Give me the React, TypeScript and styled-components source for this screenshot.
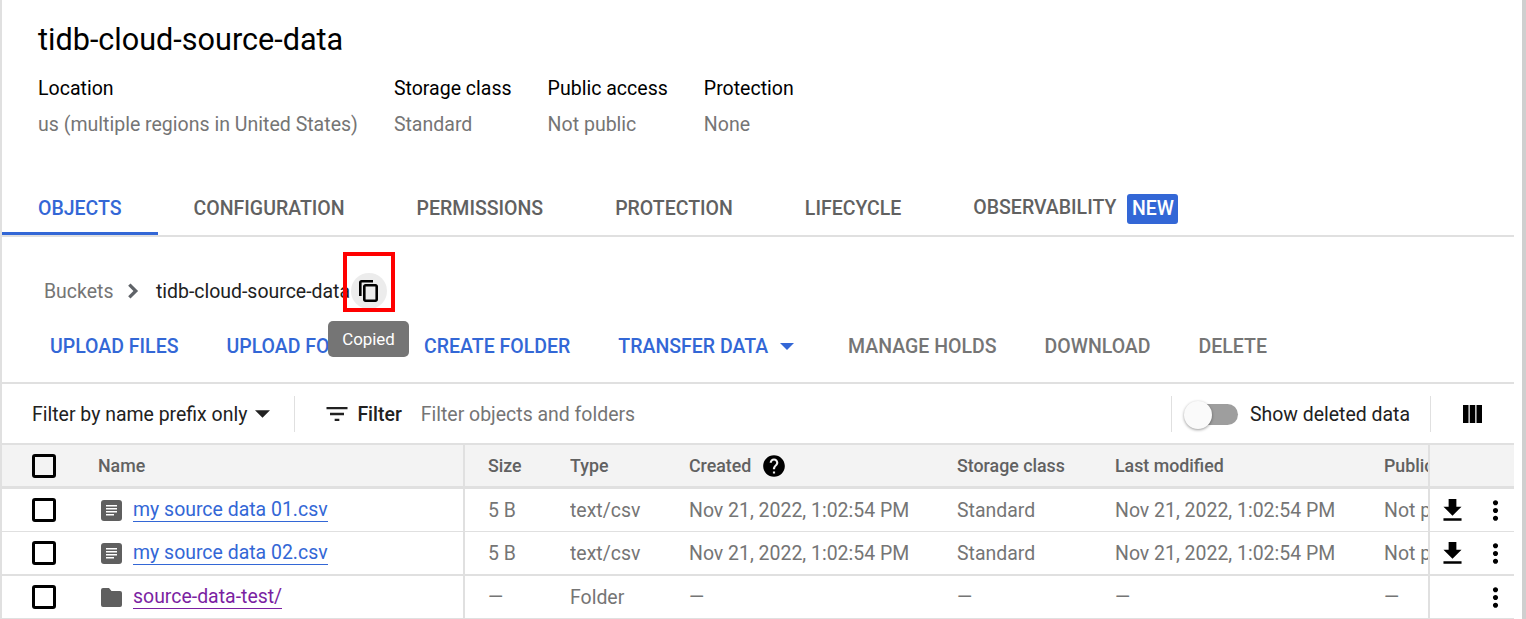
import React from 'react';
import styled, { createGlobalStyle } from 'styled-components';

const GlobalStyle = createGlobalStyle`
  html, body {
    margin: 0;
    padding: 0;
    background: #fff;
    font-family: Roboto, 'Liberation Sans', sans-serif;
    overflow: hidden;
  }
`;

const Page = styled.div`
  width: 1526px;
  height: 619px;
  box-sizing: border-box;
  border-left: 2px solid #e0e0e0;
  border-right: 4px solid #cfcfcf;
  overflow: hidden;
`;

const Main = styled.div`
  width: 1512px;
`;

const Header = styled.header`
  padding: 20px 0 0 36px;
  height: 181px;
  box-sizing: border-box;
`;

const Title = styled.h1`
  margin: 0;
  font-size: 30.6px;
  line-height: 40px;
  font-weight: 400;
  color: #000;
`;

const Summary = styled.div`
  display: flex;
  gap: 36px;
  margin-top: 8px;
  padding-top: 1px;
`;

const SummaryItem = styled.div`
  display: flex;
  flex-direction: column;
`;

const SummaryLabel = styled.div`
  font-size: 19.55px;
  line-height: 40px;
  color: #000;
`;

const SummaryValue = styled.div`
  font-size: 19.55px;
  line-height: 32px;
  color: #757575;
`;

const Tabs = styled.nav`
  display: flex;
  height: 56px;
  box-sizing: border-box;
  border-bottom: 2px solid #e0e0e0;
`;

const Tab = styled.div<{ $active?: boolean }>`
  display: flex;
  align-items: center;
  height: 54px;
  box-sizing: border-box;
  padding: 4px 36px 0;
  font-size: 19.5px;
  font-weight: 500;
  color: ${(p) => (p.$active ? '#3367d6' : '#616161')};
  border-bottom: 3px solid ${(p) => (p.$active ? '#3367d6' : 'transparent')};
`;

const RaisedLabel = styled.span`
  margin-bottom: 2px;
`;

const NewBadge = styled.span`
  display: inline-flex;
  align-items: center;
  justify-content: center;
  width: 51px;
  height: 30px;
  margin-left: 11px;
  border-radius: 3px;
  background: #3367d6;
  color: #fff;
  font-size: 19.47px;
  font-weight: 500;
`;

const Crumbs = styled.div`
  display: flex;
  align-items: center;
  height: 36px;
  margin-top: 36px;
  padding-left: 42px;
  font-size: 19.47px;
`;

const CrumbLink = styled.span`
  color: #757575;
`;

const CrumbCurrent = styled.span`
  color: #212121;
`;

const CrumbChevron = styled.svg`
  width: 28px;
  height: 28px;
  margin: 0 8px 0 6.5px;
  fill: #5f6368;
`;

const CopyButton = styled.div`
  position: relative;
  display: flex;
  align-items: center;
  justify-content: center;
  width: 36px;
  height: 36px;
  margin-left: 1px;
  border-radius: 50%;
  background: #ececec;
`;

const CopyIcon = styled.svg`
  width: 24px;
  height: 24px;
  fill: #000;
`;

const RedBox = styled.div`
  position: absolute;
  left: -8px;
  top: -21px;
  width: 52px;
  height: 60px;
  box-sizing: border-box;
  border: 4px solid #ff0000;
`;

const Tooltip = styled.div`
  position: absolute;
  left: -23px;
  top: 48px;
  width: 81px;
  height: 36px;
  display: flex;
  align-items: center;
  justify-content: center;
  border-radius: 5px;
  background: #757575;
  color: #fff;
  font-size: 16.9px;
`;

const Actions = styled.div`
  display: flex;
  align-items: center;
  height: 54px;
  margin-top: 9px;
  padding: 1px 0 9px 48px;
  gap: 48px;
  border-bottom: 2px solid #e0e0e0;
`;

const ActionButton = styled.div<{ $disabled?: boolean }>`
  display: flex;
  align-items: center;
  font-size: 19.5px;
  font-weight: 500;
  white-space: nowrap;
  color: ${(p) => (p.$disabled ? '#757575' : '#3367d6')};
`;

const Caret = styled.svg`
  width: 14px;
  height: 7px;
  margin: 0 6px 0 12px;
  fill: #3367d6;
`;

const PrefixCaret = styled.svg`
  width: 15px;
  height: 8px;
  margin: 0 24px 0 8px;
  fill: #212121;
`;

const FilterBar = styled.div`
  display: flex;
  align-items: center;
  height: 58px;
  padding: 1px 0 0 30px;
  font-size: 19.47px;
  border-bottom: 2px solid #e0e0e0;
`;

const Prefix = styled.span`
  color: #212121;
`;

const Divider = styled.span`
  width: 1px;
  height: 36px;
  background: #e0e0e0;
`;

const FilterIcon = styled.svg`
  width: 28px;
  height: 28px;
  margin: 0 6.5px 0 27.5px;
  fill: #212121;
`;

const FilterLabel = styled.span`
  font-weight: 500;
  color: #212121;
`;

const FilterInput = styled.span`
  flex: 1;
  margin-left: 19px;
  color: #757575;
`;

const Toggle = styled.span`
  position: relative;
  width: 48px;
  height: 21px;
  margin: 0 12px 0 18px;
  border-radius: 11px;
  background: #9e9e9e;
`;

const ToggleThumb = styled.span`
  position: absolute;
  left: -6px;
  top: -3px;
  width: 28px;
  height: 28px;
  border-radius: 50%;
  background: #fafafa;
  box-shadow: 0 1px 3px rgba(0, 0, 0, 0.4);
`;

const ToggleLabel = styled.span`
  color: #212121;
  margin-right: 20px;
`;

const ColumnsIcon = styled.svg`
  width: 19px;
  height: 18px;
  margin: 0 32px 0 32px;
  fill: #000;
`;

const GRID = '96px 367px 105px 119px 268px 158px 269px 44px 86px';

const HeadRow = styled.div`
  display: grid;
  grid-template-columns: ${GRID};
  height: 41px;
  background: #f3f3f3;
  border-bottom: 3px solid #e0e0e0;
  font-size: 17.8px;
  font-weight: 500;
  color: #616161;
`;

const Row = styled.div<{ $thick?: boolean }>`
  display: grid;
  grid-template-columns: ${GRID};
  height: 42px;
  border-bottom: ${(p) => (p.$thick ? 2 : 1)}px solid #e0e0e0;
  font-size: 19.47px;
  color: #757575;
`;

const Cell = styled.div<{ $divided?: boolean; $inset?: boolean }>`
  display: flex;
  align-items: center;
  min-width: 0;
  overflow: hidden;
  white-space: nowrap;
  box-sizing: border-box;
  ${(p) => p.$divided && 'border-right: 2px solid #e0e0e0;'}
  ${(p) => p.$inset && 'padding-left: 23px;'}
`;

const CheckCell = styled(Cell)`
  padding-left: 30px;
`;

const Checkbox = styled.span`
  width: 24px;
  height: 24px;
  box-sizing: border-box;
  border: 3px solid #000;
  border-radius: 3px;
`;

const FileIcon = styled.svg`
  width: 21px;
  height: 21px;
  margin: 0 11px 0 3px;
  flex: none;
`;

const FolderIcon = styled.svg`
  width: 21px;
  height: 19px;
  margin: 0 11px 0 3px;
  fill: #5f5f5f;
  flex: none;
`;

const FileLink = styled.a<{ $visited?: boolean }>`
  color: ${(p) => (p.$visited ? '#7b1fa2' : '#3367d6')};
  text-decoration: none;
  border-bottom: 1px solid currentColor;
  line-height: 23px;
`;

const HelpIcon = styled.svg`
  width: 26px;
  height: 26px;
  margin-left: 10px;
  fill: #000;
`;

const RowActions = styled(Cell)`
  border-left: 2px solid #e0e0e0;
  padding-left: 7px;
`;

const ActionIcon = styled.svg`
  width: 31px;
  height: 31px;
  fill: #000;
  flex: none;
`;

const MoreIcon = styled(ActionIcon)<{ $solo?: boolean }>`
  margin-left: ${(p) => (p.$solo ? 42.5 : 11.5)}px;
`;

const Check = () => (
  <CheckCell>
    <Checkbox />
  </CheckCell>
);

const More = ({ solo }: { solo?: boolean }) => (
  <MoreIcon $solo={solo} viewBox="0 0 24 24">
    <path d="M12 8c1.1 0 2-.9 2-2s-.9-2-2-2-2 .9-2 2 .9 2 2 2zm0 2c-1.1 0-2 .9-2 2s.9 2 2 2 2-.9 2-2-.9-2-2-2zm0 6c-1.1 0-2 .9-2 2s.9 2 2 2 2-.9 2-2-.9-2-2-2z" />
  </MoreIcon>
);

const CsvIcon = () => (
  <FileIcon viewBox="0 0 21 21">
    <rect width="21" height="21" rx="3" fill="#5f5f5f" />
    <path fill="#fff" d="M5 5h11v1.4H5zM5 8h11v1.4H5zM5 11h11v1.4H5zM5 14h8v1.4H5z" />
  </FileIcon>
);

const files = [
  { name: 'my source data 01.csv', thick: false },
  { name: 'my source data 02.csv', thick: true },
];

const App: React.FC = () => (
  <>
    <GlobalStyle />
    <Page>
      <Main>
        <Header>
          <Title>tidb-cloud-source-data</Title>
          <Summary>
            <SummaryItem>
              <SummaryLabel>Location</SummaryLabel>
              <SummaryValue>us (multiple regions in United States)</SummaryValue>
            </SummaryItem>
            <SummaryItem>
              <SummaryLabel>Storage class</SummaryLabel>
              <SummaryValue>Standard</SummaryValue>
            </SummaryItem>
            <SummaryItem>
              <SummaryLabel>Public access</SummaryLabel>
              <SummaryValue>Not public</SummaryValue>
            </SummaryItem>
            <SummaryItem>
              <SummaryLabel>Protection</SummaryLabel>
              <SummaryValue>None</SummaryValue>
            </SummaryItem>
          </Summary>
        </Header>

        <Tabs>
          <Tab $active>OBJECTS</Tab>
          <Tab>CONFIGURATION</Tab>
          <Tab>PERMISSIONS</Tab>
          <Tab>PROTECTION</Tab>
          <Tab>LIFECYCLE</Tab>
          <Tab>
            <RaisedLabel>OBSERVABILITY</RaisedLabel>
            <NewBadge>NEW</NewBadge>
          </Tab>
        </Tabs>

        <Crumbs>
          <CrumbLink>Buckets</CrumbLink>
          <CrumbChevron viewBox="0 0 24 24">
            <path d="M9 5.5L7 7.5 11.5 12 7 16.5 9 18.5 15.5 12z" />
          </CrumbChevron>
          <CrumbCurrent>tidb-cloud-source-data</CrumbCurrent>
          <CopyButton>
            <CopyIcon viewBox="0 0 24 24">
              <path d="M16 1H4.5C3.1 1 2 2.1 2 3.5V17h2.6V3.6H16V1zM18.5 5H8.5C7.1 5 6 6.1 6 7.5v13C6 21.9 7.1 23 8.5 23h10c1.4 0 2.5-1.1 2.5-2.5v-13C21 6.1 19.9 5 18.5 5zm-.1 15.4H8.6V7.6h9.8v12.8z" />
            </CopyIcon>
            <RedBox />
            <Tooltip>Copied</Tooltip>
          </CopyButton>
        </Crumbs>

        <Actions>
          <ActionButton>UPLOAD FILES</ActionButton>
          <ActionButton>UPLOAD FOLDER</ActionButton>
          <ActionButton>CREATE FOLDER</ActionButton>
          <ActionButton>
            TRANSFER DATA
            <Caret viewBox="0 0 14 7">
              <path d="M0 0h14L7 7z" />
            </Caret>
          </ActionButton>
          <ActionButton $disabled>MANAGE HOLDS</ActionButton>
          <ActionButton $disabled>DOWNLOAD</ActionButton>
          <ActionButton $disabled>DELETE</ActionButton>
        </Actions>

        <FilterBar>
          <Prefix>Filter by name prefix only</Prefix>
          <PrefixCaret viewBox="0 0 14 7">
            <path d="M0 0h14L7 7z" />
          </PrefixCaret>
          <Divider />
          <FilterIcon viewBox="0 0 24 24">
            <path d="M10 18h4v-2h-4v2zM3 6v2h18V6H3zm3 7h12v-2H6v2z" />
          </FilterIcon>
          <FilterLabel>Filter</FilterLabel>
          <FilterInput>Filter objects and folders</FilterInput>
          <Divider />
          <Toggle>
            <ToggleThumb />
          </Toggle>
          <ToggleLabel>Show deleted data</ToggleLabel>
          <Divider />
          <ColumnsIcon viewBox="0 0 19 18">
            <path d="M0 0h5.5v18H0zM6.75 0h5.5v18h-5.5zM13.5 0H19v18h-5.5z" />
          </ColumnsIcon>
        </FilterBar>

        <HeadRow>
          <Check />
          <Cell $divided>Name</Cell>
          <Cell $inset>Size</Cell>
          <Cell>Type</Cell>
          <Cell>
            Created
            <HelpIcon viewBox="0 0 24 24">
              <path d="M12 2C6.48 2 2 6.48 2 12s4.48 10 10 10 10-4.48 10-10S17.52 2 12 2zm1 17h-2v-2h2v2zm2.07-7.75l-.9.92C13.45 12.9 13 13.5 13 15h-2v-.5c0-1.1.45-2.1 1.17-2.83l1.24-1.26c.37-.36.59-.86.59-1.41 0-1.1-.9-2-2-2s-2 .9-2 2H8c0-2.21 1.79-4 4-4s4 1.79 4 4c0 .88-.36 1.68-.93 2.25z" />
            </HelpIcon>
          </Cell>
          <Cell>Storage class</Cell>
          <Cell>Last modified</Cell>
          <Cell>Public access</Cell>
          <RowActions />
        </HeadRow>

        {files.map((f) => (
          <Row key={f.name} $thick={f.thick}>
            <Check />
            <Cell $divided>
              <CsvIcon />
              <FileLink>{f.name}</FileLink>
            </Cell>
            <Cell $inset>5 B</Cell>
            <Cell>text/csv</Cell>
            <Cell>Nov 21, 2022, 1:02:54 PM</Cell>
            <Cell>Standard</Cell>
            <Cell>Nov 21, 2022, 1:02:54 PM</Cell>
            <Cell>Not public</Cell>
            <RowActions>
              <ActionIcon viewBox="0 0 24 24">
                <path d="M19 9h-4V3H9v6H5l7 7 7-7zM5 18v2h14v-2H5z" />
              </ActionIcon>
              <More />
            </RowActions>
          </Row>
        ))}

        <Row>
          <Check />
          <Cell $divided>
            <FolderIcon viewBox="0 0 21 19">
              <path d="M2 0h6l2.5 3H19a2 2 0 012 2v12a2 2 0 01-2 2H2a2 2 0 01-2-2V2a2 2 0 012-2z" />
            </FolderIcon>
            <FileLink $visited>source-data-test/</FileLink>
          </Cell>
          <Cell $inset>—</Cell>
          <Cell>Folder</Cell>
          <Cell>—</Cell>
          <Cell>—</Cell>
          <Cell>—</Cell>
          <Cell>—</Cell>
          <RowActions>
            <More solo />
          </RowActions>
        </Row>
      </Main>
    </Page>
  </>
);

export default App;
